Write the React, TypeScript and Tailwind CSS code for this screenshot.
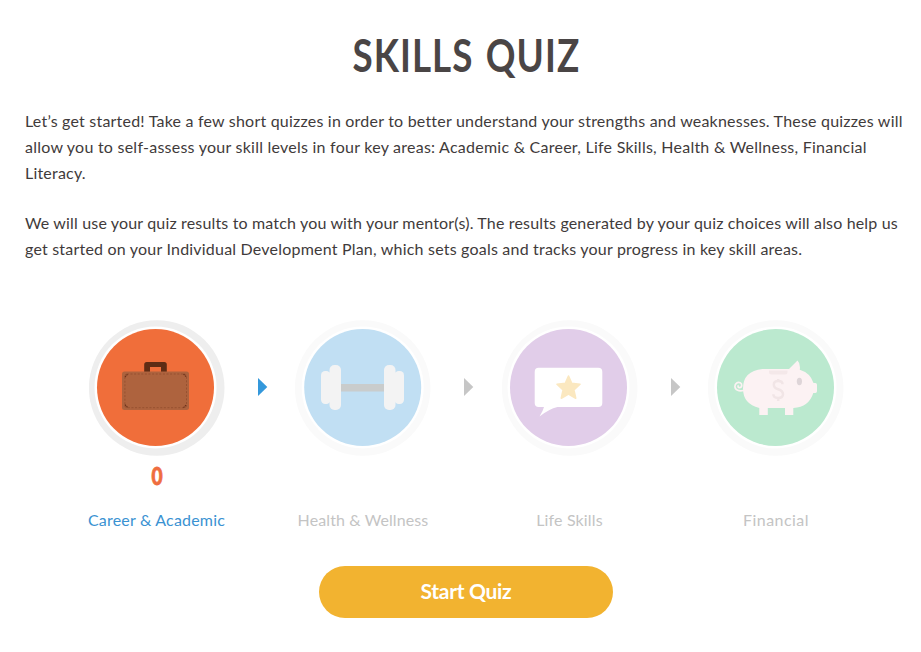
import React from "react";

type Step = {
  label: string;
  score?: string;
  active?: boolean;
  viewBox: string;
  labelClass: string;
  art: React.ReactNode;
};

function Rings({ x, cx, fill, ring }: { x: number; cx: number; fill: string; ring: string }) {
  return (
    <>
      <circle cx={x + 67.7} cy="388" r="67.8" fill={ring} />
      <circle cx={cx} cy="387.5" r="61" fill="#fff" />
      <circle cx={cx} cy="387.5" r="58.5" fill={fill} />
    </>
  );
}

const steps: Step[] = [
  {
    label: "Career & Academic",
    score: "0",
    active: true,
    viewBox: "89 320 136 136",
    labelClass: "text-[#3a92d2] tracking-[0.2px]",
    art: (
      <>
        <Rings x={89} cx={155.5} fill="#f06e3a" ring="#eeeeee" />
        <path d="M144.2 372V364.5Q144.2 362 146.7 362H164.3Q166.8 362 166.8 364.5V372H161V367H150V372Z" fill="#5f2c14" />
        <rect x="122" y="371.5" width="67" height="38.5" rx="2.5" fill="#ae633e" />
        <rect x="124.9" y="374" width="61.6" height="33.7" rx="2" fill="none" stroke="#944f2f" strokeWidth=".9" strokeDasharray="2 1.6" />
        <path d="M124.9 377L127.9 374M183.5 374L186.5 377M124.9 404.7L127.9 407.7M183.5 407.7L186.5 404.7" stroke="#6b3019" strokeWidth="1.2" strokeDasharray="1.5 .7" />
      </>
    ),
  },
  {
    label: "Health & Wellness",
    viewBox: "295 320 136 136",
    labelClass: "text-[#c4c4c4] tracking-[0.1px]",
    art: (
      <>
        <Rings x={295} cx={362.7} fill="#c1dff3" ring="#fafafa" />
        <rect x="340" y="384" width="45" height="7.5" fill="#c9cccc" />
        <rect x="321" y="371" width="9.5" height="33" rx="4.2" fill="#f3f3f3" />
        <rect x="394.5" y="371" width="9.5" height="33" rx="4.2" fill="#f3f3f3" />
        <rect x="329.5" y="365" width="11.5" height="45" rx="5" fill="#f3f3f3" />
        <rect x="384" y="365" width="11.5" height="45" rx="5" fill="#f3f3f3" />
      </>
    ),
  },
  {
    label: "Life Skills",
    viewBox: "502 320 136 136",
    labelClass: "text-[#c4c4c4] tracking-[0.15px]",
    art: (
      <>
        <Rings x={502} cx={568.5} fill="#e1cde9" ring="#fafafa" />
        <path d="M538.7 367.7H598.3Q602.3 367.7 602.3 371.7V403Q602.3 407 598.3 407H557.5Q549 409 539.5 416.5Q543 411 544 407H538.7Q534.7 407 534.7 403V371.7Q534.7 367.7 538.7 367.7Z" fill="#fff" />
        <path d="M568.5 376L571.7 383.4L580 384.2L573.9 389.8L575.7 398.2L568.5 394L561.3 398.2L563.1 389.8L557 384.2L565.3 383.4Z" fill="#fbe8c0" stroke="#fbe8c0" strokeWidth="1.6" strokeLinejoin="round" />
      </>
    ),
  },
  {
    label: "Financial",
    viewBox: "708 320 136 136",
    labelClass: "text-[#c4c4c4] tracking-[0.45px]",
    art: (
      <>
        <Rings x={708} cx={775.5} fill="#bbe9cf" ring="#fafafa" />
        <path d="M744 390.2C739 391.8 735 390 734.9 386.5C734.9 383 738 381.7 740.2 382.8C742.6 384.1 742 387.7 739.6 387.7C738 387.7 737.5 386.2 738.6 385.4" fill="none" stroke="#fcf2f3" strokeWidth="1.7" />
        <path d="M762.5 369H789L797.5 360.6Q800.6 363.5 799.8 369.7Q810.5 373 813.5 383H815.3Q817 383 817 384.7V391.3Q817 393 815.3 393H813.3Q809 407 793.3 408V415H785V408H767.8V415H759.3V408Q743 404 743 388.5Q743 371 762.5 369Z" fill="#fcf2f3" />
        <path d="M769 370.5H787.5V372Q787.5 374.5 785 374.5H771.5Q769 374.5 769 372Z" fill="#f4e8e9" />
        <ellipse cx="799.4" cy="381.5" rx="2.6" ry="3.7" fill="#ded5d8" />
        <path d="M782.5 384.2Q782.5 381 778.2 381Q773.8 381 773.8 384.7Q773.8 387.8 778.2 389.2Q783 390.7 783 394.3Q783 398 778.2 398Q773.5 398 773.3 394.3M778.2 379V382M778.2 397V401" fill="none" stroke="#f1e5e6" strokeWidth="2.5" />
      </>
    ),
  },
];

const intro = [
  { text: "Let’s get started! Take a few short quizzes in order to better understand your strengths and weaknesses. These quizzes will", cls: "tracking-[0.208px]" },
  { text: "allow you to self-assess your skill levels in four key areas: Academic & Career, Life Skills, Health & Wellness, Financial", cls: "tracking-[0.242px]" },
  { text: "Literacy.", cls: "tracking-[0.2px]" },
];

const details = [
  { text: "We will use your quiz results to match you with your mentor(s). The results generated by your quiz choices will also help us", cls: "tracking-[0.16px]" },
  { text: "get started on your Individual Development Plan, which sets goals and tracks your progress in key skill areas.", cls: "tracking-[0.205px]" },
];

function Paragraph({ lines }: { lines: { text: string; cls: string }[] }) {
  return (
    <p className="mb-6 text-[16px] leading-[26px] text-[#3f3b3b]">
      {lines.map((l) => (
        <span key={l.text} className={`block whitespace-nowrap ${l.cls}`}>{l.text}</span>
      ))}
    </p>
  );
}

function Arrow({ active }: { active?: boolean }) {
  return (
    <div className="flex h-[134px] w-[71.5px] items-center pl-[33.7px]">
      <svg width="10" height="18" viewBox="0 0 10 18">
        <path d="M0 0L9.3 9L0 18Z" fill={active ? "#3498db" : "#c6c6c6"} />
      </svg>
    </div>
  );
}

export default function App() {
  return (
    <main className="h-[652px] w-[921px] overflow-hidden bg-white font-['Lato',sans-serif]">
      <h1 className="flex h-[108px] justify-center pt-[27px] pl-[11px] text-[46px] leading-[56px] font-bold text-[#4a4545]">
        <span className="inline-block scale-x-[0.8] tracking-[1.3px] word-spacing-normal whitespace-nowrap [word-spacing:3px]">SKILLS QUIZ</span>
      </h1>
      <section className="h-[212px] pl-[25px]">
        <Paragraph lines={intro} />
        <Paragraph lines={details} />
      </section>
      <section className="flex h-[246px] pl-[89px]">
        {steps.map((s, i) => (
          <React.Fragment key={s.label}>
            <div className="flex w-[135px] shrink-0 flex-col items-center">
              <svg width="136" height="136" viewBox={s.viewBox} className="shrink-0">{s.art}</svg>
              <div className="flex h-[40px] items-center justify-center text-[24px] font-black text-[#ef6d3f]">
                <span className="inline-block scale-x-[0.8] [-webkit-text-stroke:0.8px_#ef6d3f]">{s.score}</span>
              </div>
              <div className={`mt-[11px] text-[16px] leading-[26px] whitespace-nowrap ${s.labelClass}`}>{s.label}</div>
            </div>
            {i < steps.length - 1 && <Arrow active={s.active} />}
          </React.Fragment>
        ))}
      </section>
      <div className="flex justify-center pl-[11px]">
        <button className="h-[52px] w-[294px] rounded-full bg-[#f2b330] pb-[3px] text-[21px] font-bold tracking-[-0.3px] text-white">Start Quiz</button>
      </div>
    </main>
  );
}
